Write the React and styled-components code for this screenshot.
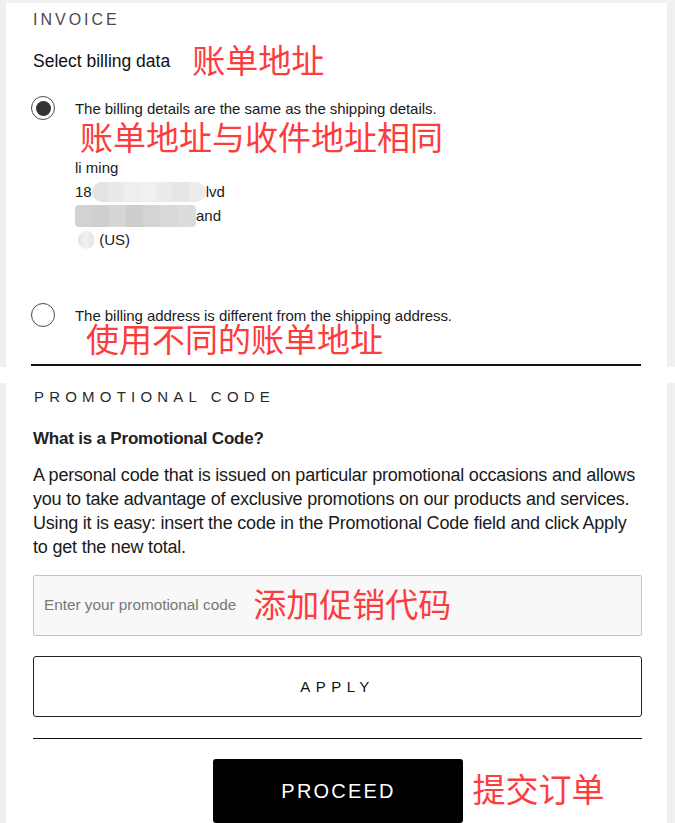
import React from "react";
import styled, { createGlobalStyle } from "styled-components";

const GlobalStyle = createGlobalStyle`
  html, body { margin: 0; padding: 0; background: #ffffff; }
  body { font-family: "Liberation Sans", Arial, sans-serif; color: #1a1a1a; }
  * { box-sizing: border-box; }
`;

const Page = styled.div`
  width: 675px;
  display: flex;
  flex-direction: column;
  gap: 16px;
`;

const Panel = styled.section`
  background: #ffffff;
  border-left: 6px solid #efefef;
  border-right: 8px solid #eff0f2;
  border-top: ${(p) => (p.$top ? "3px solid #f1f1f1" : "0")};
  padding: ${(p) => (p.$top ? "7px 26px 1px 25px" : "4px 25px 0 27px")};
  display: flex;
  flex-direction: column;
`;

const SectionTitle = styled.h2`
  margin: 0;
  font-family: "Liberation Sans", Arial, sans-serif;
  font-weight: 400;
  font-size: ${(p) => (p.$size ? p.$size : 16)}px;
  letter-spacing: ${(p) => (p.$spacing ? p.$spacing : 3)}px;
  line-height: 20px;
  color: ${(p) => p.$color || "#4a4a4a"};
  padding-left: ${(p) => p.$indent || 0}px;
`;

const Note = styled.span`
  font-family: "Noto Sans CJK SC", "Noto Sans", sans-serif;
  font-size: 33px;
  line-height: 40px;
  padding-bottom: 4px;
  color: #fc3d3d;
  white-space: nowrap;
`;

const NoteLine = styled.div`
  margin-top: ${(p) => p.$mt || 0}px;
  padding-left: ${(p) => p.$indent || 0}px;
  height: 40px;
  display: flex;
  align-items: center;
`;

const SelectRow = styled.div`
  margin-top: 11px;
  padding-left: 2px;
  display: flex;
  align-items: center;
  gap: 22px;
  height: 40px;
`;

const Label = styled.span`
  font-size: 17.5px;
  color: #111;
`;

const OptionRow = styled.label`
  margin-top: ${(p) => p.$mt || 0}px;
  display: flex;
  align-items: center;
  gap: 20px;
  height: 24px;
  cursor: pointer;
`;

const Radio = styled.span`
  width: 24px;
  height: 24px;
  border-radius: 50%;
  border: 1.3px solid #4a4a4a;
  display: flex;
  align-items: center;
  justify-content: center;
  flex: none;
  &::after {
    content: "";
    width: 15px;
    height: 15px;
    border-radius: 50%;
    background: ${(p) => (p.$checked ? "#333" : "transparent")};
  }
`;

const OptionText = styled.span`
  font-size: 15px;
  letter-spacing: -0.05px;
  color: #1a1a1a;
`;

const Address = styled.div`
  margin-top: -2px;
  padding-left: 44px;
  display: flex;
  flex-direction: column;
`;

const AddrLine = styled.div`
  height: 24px;
  line-height: 24px;
  font-size: 15px;
  color: #1a1a1a;
  display: flex;
  align-items: center;
  white-space: nowrap;
`;

const Blur = styled.span`
  display: inline-block;
  width: ${(p) => p.$w}px;
  height: ${(p) => p.$h || 20}px;
  margin-left: ${(p) => p.$ml || 0}px;
  border-radius: ${(p) => p.$r || 10}px;
  background: ${(p) =>
    p.$dark
      ? "linear-gradient(90deg,#d2d2d2 0 14%,#cfcfcf 14% 28%,#d6d6d6 28% 42%,#cdcdcd 42% 56%,#d4d4d4 56% 70%,#d9d9d9 70% 85%,#dcdcdc 85%)"
      : "linear-gradient(90deg,#e3e3e3 0 14%,#e9e9e9 14% 28%,#eeeeee 28% 42%,#f0f0f0 42% 56%,#ebebeb 56% 70%,#e6e6e6 70% 85%,#ececec 85%)"};
  flex: none;
`;

const Divider = styled.hr`
  margin: ${(p) => p.$mt || 0}px 0 0 0;
  border: 0;
  height: 1.5px;
  background: #111;
  width: 100%;
`;

const Question = styled.h3`
  margin: 20px 0 0 0;
  font-size: 17px;
  font-weight: 700;
  line-height: 24px;
  color: #222;
  letter-spacing: -0.2px;
`;

const Paragraph = styled.p`
  margin: 12px 0 0 0;
  padding-right: 4px;
  font-size: 18px;
  line-height: 24px;
  color: #1a1a1a;
  letter-spacing: -0.2px;
`;

const InputBox = styled.div`
  margin-top: 16px;
  height: 61px;
  border: 1px solid #c4c4c4;
  border-radius: 2px;
  background: #f8f8f8;
  display: flex;
  align-items: center;
  padding-left: 10px;
  gap: 17px;
`;

const Placeholder = styled.span`
  font-size: 15.3px;
  color: #777;
`;

const OutlineButton = styled.button`
  margin-top: 20px;
  height: 61px;
  width: 100%;
  border: 1.5px solid #222;
  border-radius: 3px;
  background: #fff;
  font-family: "Liberation Sans", Arial, sans-serif;
  font-size: 15px;
  letter-spacing: 5.5px;
  color: #111;
  padding-left: 6px;
  cursor: pointer;
`;

const ProceedRow = styled.div`
  margin-top: 20px;
  display: flex;
  justify-content: center;
`;

const ProceedWrap = styled.div`
  position: relative;
`;

const ProceedButton = styled.button`
  width: 250px;
  height: 64px;
  border: 0;
  border-radius: 3px;
  background: #000;
  color: #fff;
  font-family: "Liberation Sans", Arial, sans-serif;
  font-size: 20px;
  letter-spacing: 2.2px;
  padding-left: 8px;
  cursor: pointer;
`;

const SideNote = styled(Note)`
  position: absolute;
  left: calc(100% + 10px);
  top: 9px;
`;

export default function App() {
  return (
    <>
      <GlobalStyle />
      <Page>
        <Panel $top>
          <SectionTitle $indent={2}>INVOICE</SectionTitle>
          <SelectRow>
            <Label>Select billing data</Label>
            <Note>账单地址</Note>
          </SelectRow>
          <OptionRow $mt={15}>
            <Radio $checked />
            <OptionText>The billing details are the same as the shipping details.</OptionText>
          </OptionRow>
          <NoteLine $mt={-2} $indent={49}>
            <Note>账单地址与收件地址相同</Note>
          </NoteLine>
          <Address>
            <AddrLine>li ming</AddrLine>
            <AddrLine>
              18<Blur $w={114} $h={20} />lvd
            </AddrLine>
            <AddrLine>
              <Blur $w={121} $h={22} $dark $r={4} />and
            </AddrLine>
            <AddrLine>
              <Blur $w={17} $h={18} $ml={3} $r={9} />&nbsp;(US)
            </AddrLine>
          </Address>
          <OptionRow $mt={51}>
            <Radio />
            <OptionText>The billing address is different from the shipping address.</OptionText>
          </OptionRow>
          <NoteLine $mt={-7} $indent={55}>
            <Note>使用不同的账单地址</Note>
          </NoteLine>
          <Divider $mt={4} />
        </Panel>
        <Panel>
          <SectionTitle $size={15} $spacing={5.2} $color="#2a2a2a" $indent={1}>
            PROMOTIONAL CODE
          </SectionTitle>
          <Question>What is a Promotional Code?</Question>
          <Paragraph>
            A personal code that is issued on particular promotional occasions and allows you to take
            advantage of exclusive promotions on our products and services. Using it is easy: insert
            the code in the Promotional Code field and click Apply to get the new total.
          </Paragraph>
          <InputBox>
            <Placeholder>Enter your promotional code</Placeholder>
            <Note>添加促销代码</Note>
          </InputBox>
          <OutlineButton>APPLY</OutlineButton>
          <Divider $mt={21} />
          <ProceedRow>
            <ProceedWrap>
              <ProceedButton>PROCEED</ProceedButton>
              <SideNote>提交订单</SideNote>
            </ProceedWrap>
          </ProceedRow>
        </Panel>
      </Page>
    </>
  );
}
